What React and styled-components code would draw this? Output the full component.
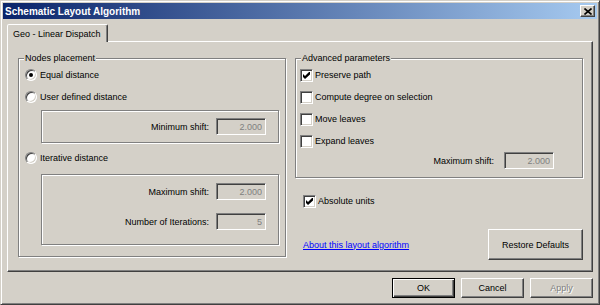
import React from 'react'
import styled, { createGlobalStyle } from 'styled-components'

const GlobalStyle = createGlobalStyle`
  html, body {
    margin: 0;
    padding: 0;
    background: #d4d0c8;
  }

  body {
    font-family: "Liberation Sans", Arial, sans-serif;
    font-size: 9px;
    color: #000;
  }
`

const CloseIcon = () => (
  <svg width='8' height='7' viewBox='0 0 8 7'>
    <path d='M0.5 0.5 L7.5 6.5 M7.5 0.5 L0.5 6.5' stroke='#000' strokeWidth='1.6' fill='none' />
  </svg>
)

const Tick = () => (
  <svg width='7' height='7' viewBox='0 0 7 7'>
    <polygon points='0,2 2,4 6,0 7,0 7,2.5 2,7 0,5' fill='#000' />
  </svg>
)

const OptionRadio = ({ label, checked, height }) => (
  <OptionRow $height={height}>
    <Radio $checked={checked} />
    <span>{label}</span>
  </OptionRow>
)

const OptionCheck = ({ label, checked, height, indent }) => (
  <OptionRow $height={height} $indent={indent}>
    <CheckBox>{checked && <Tick />}</CheckBox>
    <span>{label}</span>
  </OptionRow>
)

const Field = ({ label, value }) => (
  <FieldRow>
    <span>{label}</span>
    <NumberField type='text' value={value} disabled readOnly />
  </FieldRow>
)

const App = () => {
  return (
    <>
      <GlobalStyle />
      <Window>
        <TitleBar>
          <span>Schematic Layout Algorithm</span>
          <CloseButton aria-label='Close'>
            <CloseIcon />
          </CloseButton>
        </TitleBar>

        <Body>
          <TabStrip>
            <Tab>Geo - Linear Dispatch</Tab>
          </TabStrip>

          <TabPanel>
            <Group>
              <Legend>Nodes placement</Legend>
              <GroupBody $pad='0 6px 11px 6px'>
                <OptionRadio label='Equal distance' checked />
                <OptionRadio label='User defined distance' />
                <SubFrame $height={33} $top={2} $center>
                  <Field label='Minimum shift:' value='2.000' />
                </SubFrame>
                <OptionRow $height={22} $top={4}>
                  <Radio />
                  <span>Iterative distance</span>
                </OptionRow>
                <SubFrame $height={71} $top={5}>
                  <Field label='Maximum shift:' value='2.000' />
                  <Field label='Number of Iterations:' value='5' />
                </SubFrame>
              </GroupBody>
            </Group>

            <SideColumn>
              <Group>
                <Legend>Advanced parameters</Legend>
                <GroupBody $pad='0 28px 8px 4px'>
                  <OptionCheck label='Preserve path' checked />
                  <OptionCheck label='Compute degree on selection' />
                  <OptionCheck label='Move leaves' />
                  <OptionCheck label='Expand leaves' />
                  <WideFieldRow>
                    <span>Maximum shift:</span>
                    <NumberField type='text' value='2.000' disabled readOnly />
                  </WideFieldRow>
                </GroupBody>
              </Group>

              <AbsoluteRow>
                <CheckBox>
                  <Tick />
                </CheckBox>
                <span>Absolute units</span>
              </AbsoluteRow>

              <ActionRow>
                <HelpLink href='#'>About this layout algorithm</HelpLink>
                <PushButton>Restore Defaults</PushButton>
              </ActionRow>
            </SideColumn>
          </TabPanel>

          <Footer>
            <DialogButton $default>OK</DialogButton>
            <DialogButton>Cancel</DialogButton>
            <DialogButton disabled>Apply</DialogButton>
          </Footer>
        </Body>
      </Window>
    </>
  )
}

const Window = styled.div`
  box-sizing: border-box;
  width: 600px;
  height: 305px;
  padding: 2px;
  display: flex;
  flex-direction: column;
  background: #d4d0c8;
  border: 1px solid;
  border-color: #d4d0c8 #404040 #404040 #d4d0c8;
  box-shadow: inset 1px 1px #fff, inset -1px -1px #808080;
`

const TitleBar = styled.div`
  flex: none;
  height: 16px;
  display: flex;
  align-items: center;
  justify-content: space-between;
  padding: 0 2px 0 2px;
  background: linear-gradient(to right, #0a246a, #a6caf0);
  color: #fff;
  font-size: 10px;
  font-weight: bold;
`

const CloseButton = styled.button`
  box-sizing: border-box;
  width: 15px;
  height: 12px;
  padding: 0;
  display: flex;
  align-items: center;
  justify-content: center;
  background: #d4d0c8;
  border: 1px solid;
  border-color: #fff #404040 #404040 #fff;
  box-shadow: inset -1px -1px #808080;
`

const Body = styled.div`
  flex: 1;
  min-height: 0;
  display: flex;
  flex-direction: column;
  padding: 5px 4px 0;
`

const TabStrip = styled.div`
  flex: none;
  height: 17px;
  display: flex;
  align-items: flex-start;
`

const Tab = styled.div`
  box-sizing: border-box;
  position: relative;
  z-index: 1;
  height: 18px;
  padding: 0 6px 0 5px;
  display: flex;
  align-items: center;
  background: #d4d0c8;
  border: 1px solid;
  border-bottom: none;
  border-color: #fff #404040 transparent #fff;
  border-radius: 2px 2px 0 0;
  box-shadow: inset -1px 0 #808080;
`

const TabPanel = styled.div`
  box-sizing: border-box;
  flex: 1;
  display: grid;
  grid-template-columns: 268px 1fr;
  column-gap: 9px;
  align-items: start;
  padding: 10px 9px 10px 10px;
  border: 1px solid;
  border-color: #fff #404040 #404040 #fff;
  box-shadow: inset -1px -1px #808080;
`

const Group = styled.fieldset`
  box-sizing: border-box;
  min-width: 0;
  margin: 0;
  padding: 0;
  border: 1px solid #808080;
  box-shadow: inset 1px 1px #fff, 1px 1px #fff;
`

const Legend = styled.legend`
  margin-left: 5px;
  padding: 0 1px;
  line-height: 12px;
  background: #d4d0c8;
`

const GroupBody = styled.div`
  display: flex;
  flex-direction: column;
  padding: ${({ $pad }) => $pad};
`

const OptionRow = styled.label`
  height: ${({ $height = 22 }) => $height}px;
  margin-top: ${({ $top = 0 }) => $top}px;
  padding-left: ${({ $indent = 0 }) => $indent}px;
  display: flex;
  align-items: center;
`

const Radio = styled.span`
  box-sizing: border-box;
  flex: none;
  width: 12px;
  height: 12px;
  margin-right: 3px;
  display: flex;
  align-items: center;
  justify-content: center;
  border-radius: 50%;
  border: 1px solid;
  border-color: #808080 #fff #fff #808080;
  box-shadow: inset 1px 1px #404040, inset -1px -1px #d4d0c8;
  background: #fff;

  &::after {
    content: '';
    display: ${({ $checked }) => ($checked ? 'block' : 'none')};
    width: 4px;
    height: 4px;
    border-radius: 50%;
    background: #000;
  }
`

const CheckBox = styled.span`
  box-sizing: border-box;
  flex: none;
  width: 13px;
  height: 13px;
  margin-right: 2px;
  display: flex;
  align-items: center;
  justify-content: center;
  border: 1px solid;
  border-color: #808080 #fff #fff #808080;
  box-shadow: inset 1px 1px #404040, inset -1px -1px #d4d0c8;
  background: #fff;
`

const SubFrame = styled.div`
  box-sizing: border-box;
  height: ${({ $height }) => $height}px;
  margin: ${({ $top }) => $top}px 0 0 16px;
  padding: ${({ $center }) => ($center ? '0 12px 0 0' : '8px 12px 0 0')};
  display: flex;
  flex-direction: column;
  justify-content: ${({ $center }) => ($center ? 'center' : 'flex-start')};
  gap: 13px;
  border: 1px solid #808080;
  box-shadow: inset 1px 1px #fff, 1px 1px #fff;
`

const FieldRow = styled.div`
  display: flex;
  align-items: center;
  justify-content: flex-end;
  gap: 7px;
`

const WideFieldRow = styled(FieldRow)`
  gap: 10px;
`

const NumberField = styled.input`
  box-sizing: border-box;
  width: 50px;
  height: 17px;
  margin: 0;
  padding: 0 3px;
  font: inherit;
  text-align: right;
  color: #808080;
  background: #d4d0c8;
  border: 1px solid;
  border-color: #808080 #fff #fff #808080;
  box-shadow: inset 1px 1px #404040, inset -1px -1px #d4d0c8;

  &:disabled {
    color: #808080;
    background: #d4d0c8;
  }
`

const SideColumn = styled.div`
  display: flex;
  flex-direction: column;
`

const AbsoluteRow = styled(OptionRow)`
  height: 20px;
  margin-top: 13px;
  padding-left: 8px;
`

const ActionRow = styled.div`
  margin-top: 18px;
  padding-left: 8px;
  display: flex;
  align-items: center;
  justify-content: space-between;
`

const HelpLink = styled.a`
  color: #0000ff;
  text-decoration: underline;
`

const raised = `
  border: 1px solid;
  border-color: #fff #404040 #404040 #fff;
  box-shadow: inset -1px -1px #808080;
`

const PushButton = styled.button`
  box-sizing: border-box;
  width: 95px;
  height: 31px;
  padding: 0;
  font: inherit;
  color: #000;
  background: #d4d0c8;
  ${raised}
`

const Footer = styled.div`
  box-sizing: border-box;
  flex: none;
  height: 30px;
  padding-top: 6px;
  display: flex;
  justify-content: flex-end;
  align-items: flex-start;
  gap: 6px;
`

const DialogButton = styled.button`
  box-sizing: border-box;
  width: 63px;
  height: 20px;
  padding: 0;
  font: inherit;
  color: #000;
  background: #d4d0c8;
  ${({ $default }) =>
    $default
      ? `
    border: 1px solid #000;
    box-shadow: inset 1px 1px #fff, inset -1px -1px #404040, inset -2px -2px #808080;
  `
      : raised}

  &:disabled {
    color: #808080;
    text-shadow: 1px 1px #fff;
  }
`

export default App
